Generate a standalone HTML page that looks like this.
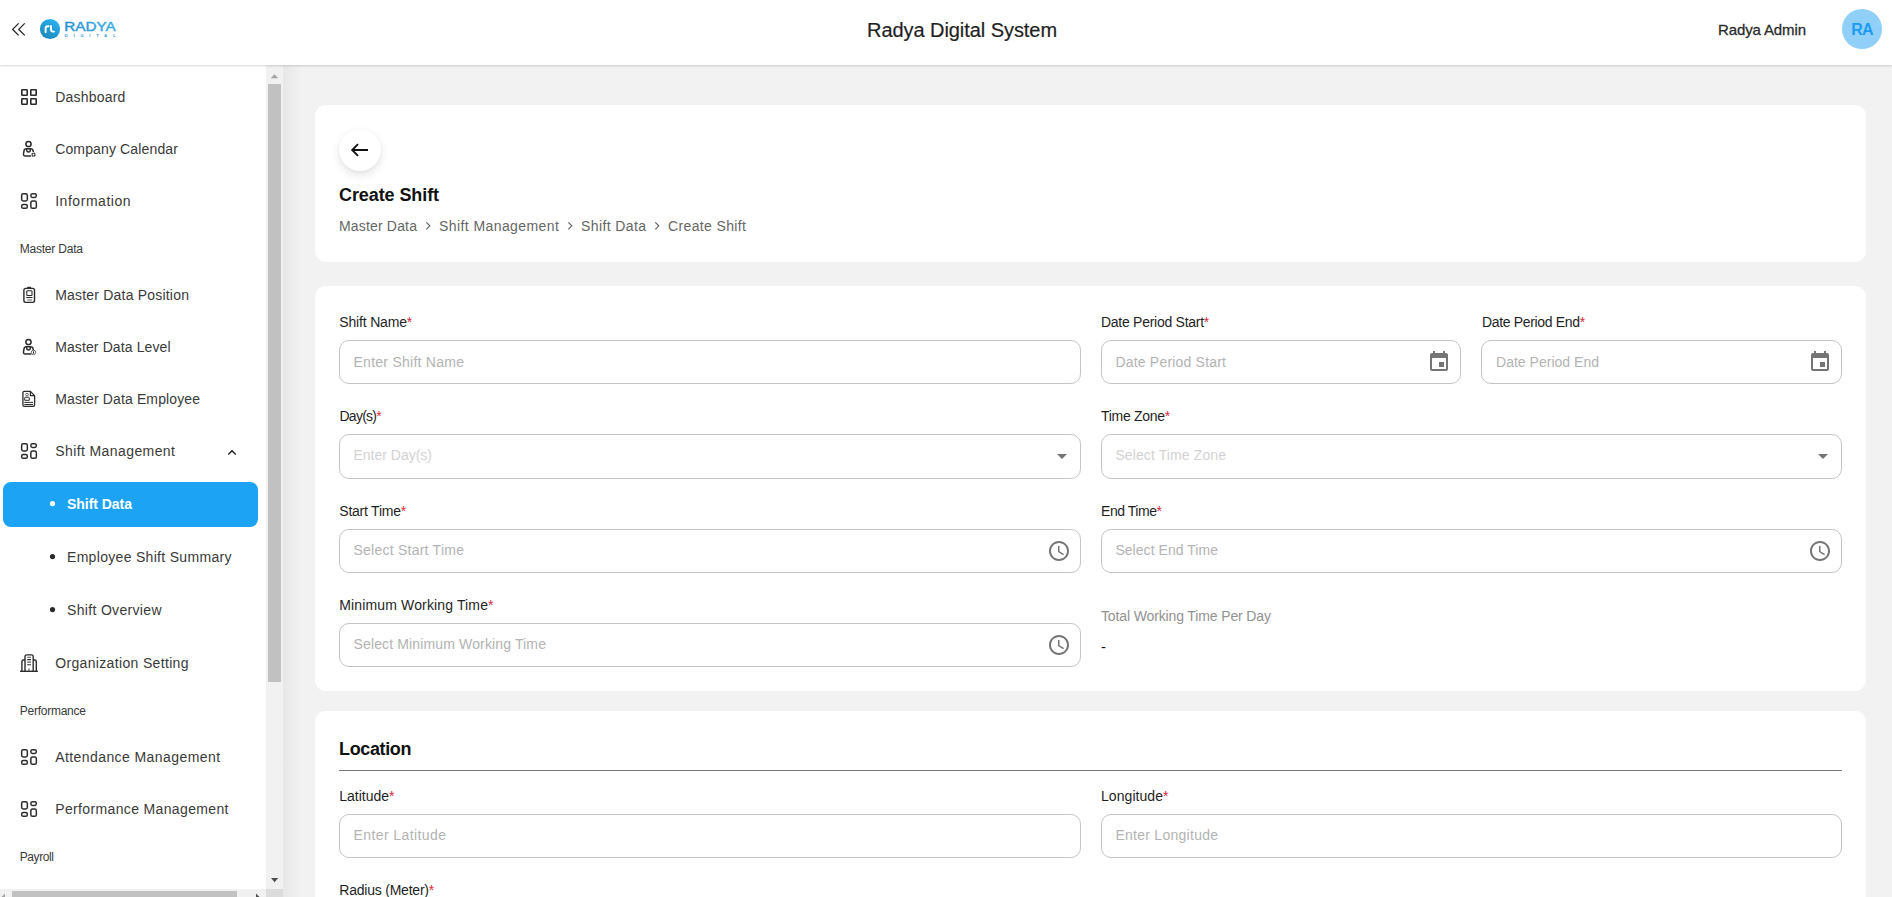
<!DOCTYPE html>
<html lang="en">
<head>
<meta charset="utf-8">
<title>Radya Digital System - Create Shift</title>
<style>
*{box-sizing:border-box;margin:0;padding:0}
html,body{width:1892px;height:897px;overflow:hidden;background:#f2f2f2;font-family:"Liberation Sans",sans-serif}
#root{position:relative;width:1892px;height:897px;overflow:hidden;background:#f2f2f2}
.abs{position:absolute}
.grp{position:absolute;left:0;top:0;width:0;height:0}
.t{position:absolute;white-space:nowrap;line-height:1}
.req{color:#e0243a}
.med{-webkit-text-stroke:0.3px currentColor}
.med2{-webkit-text-stroke:0.2px currentColor}
#header{position:absolute;left:0;top:0;width:1892px;height:65px;background:#fff;box-shadow:0 1px 2px rgba(0,0,0,.17);z-index:5}
#sidebar{position:absolute;left:0;top:65px;width:266px;height:832px;background:#fff;z-index:2}
#sideshadow{position:absolute;left:283px;top:65px;width:20px;height:832px;background:linear-gradient(90deg,rgba(0,0,0,.045),rgba(0,0,0,0));z-index:1}
#vtrack{position:absolute;left:266px;top:66px;width:17px;height:823px;background:#f1f1f1;z-index:3}
#vthumb{position:absolute;left:268px;top:84px;width:13px;height:598px;background:#c1c1c1;z-index:4}
#htrack{position:absolute;left:0;top:889px;width:266px;height:8px;background:#f1f1f1;z-index:3}
#hthumb{position:absolute;left:12px;top:891px;width:225px;height:6px;background:#c1c1c1;z-index:4}
#corner{position:absolute;left:266px;top:889px;width:17px;height:8px;background:#dcdcdc;z-index:4}
.card{position:absolute;left:315px;width:1551px;background:#fff;border-radius:11px}
.inp{position:absolute;height:44px;border:1px solid #c4c4c4;border-radius:10px;background:#fff}
.active{position:absolute;left:3px;top:482px;width:255px;height:45px;background:#1ca3f3;border-radius:8px;z-index:3}
.z{z-index:6}
svg{position:absolute;overflow:visible}
</style>
</head>
<body>
<div id="root">
<main class="grp">
<!-- main cards -->
<div class="card" style="top:105px;height:157px"></div>
<div class="card" style="top:286px;height:405px"></div>
<div class="card" style="top:711px;height:260px"></div>

<!-- back button -->
<div class="abs" style="left:339px;top:129px;width:42px;height:42px;border-radius:50%;background:#fff;box-shadow:0 4px 10px rgba(0,0,0,.10),0 1px 3px rgba(0,0,0,.05)"></div>
<svg style="left:351px;top:143px" width="18" height="14" viewBox="0 0 18 14"><path d="M17 7H1.8M7 1.2L1.2 7L7 12.8" fill="none" stroke="#111" stroke-width="1.9" stroke-linecap="butt" stroke-linejoin="miter"/></svg>

<!-- inputs -->
<div class="inp" style="left:339px;top:340px;width:742px"></div>
<div class="inp" style="left:1101px;top:340px;width:360px"></div>
<div class="inp" style="left:1481px;top:340px;width:361px"></div>
<div class="inp" style="left:339px;top:434px;width:742px;height:45px"></div>
<div class="inp" style="left:1101px;top:434px;width:741px;height:45px"></div>
<div class="inp" style="left:339px;top:529px;width:742px"></div>
<div class="inp" style="left:1101px;top:529px;width:741px"></div>
<div class="inp" style="left:339px;top:623px;width:742px"></div>
<div class="inp" style="left:339px;top:814px;width:742px"></div>
<div class="inp" style="left:1101px;top:814px;width:741px"></div>
<!-- location divider -->
<div class="abs" style="left:339px;top:770px;width:1503px;height:1px;background:#7a7a7a"></div>

<svg class="z" style="left:424px;top:220px;z-index:6" width="10" height="12" viewBox="424 220 10 12" ><path d="M426.3 222.3 L429.8 225.8 L426.3 229.3" fill="none" stroke="#666" stroke-width="1.2"/></svg>
<svg class="z" style="left:566px;top:220px;z-index:6" width="10" height="12" viewBox="566 220 10 12" ><path d="M568.3 222.3 L571.8 225.8 L568.3 229.3" fill="none" stroke="#666" stroke-width="1.2"/></svg>
<svg class="z" style="left:653px;top:220px;z-index:6" width="10" height="12" viewBox="653 220 10 12" ><path d="M655.3 222.3 L658.8 225.8 L655.3 229.3" fill="none" stroke="#666" stroke-width="1.2"/></svg>
<svg class="z" style="left:1427px;top:350px" width="24" height="24" viewBox="0 0 24 24"><path d="M17 12h-5v5h5v-5zM16 1v2H8V1H6v2H5c-1.11 0-1.99.9-1.99 2L3 19c0 1.1.89 2 2 2h14c1.1 0 2-.9 2-2V5c0-1.1-.9-2-2-2h-1V1h-2zm3 18H5V8h14v11z" fill="#757575"/></svg>
<svg class="z" style="left:1808px;top:350px" width="24" height="24" viewBox="0 0 24 24"><path d="M17 12h-5v5h5v-5zM16 1v2H8V1H6v2H5c-1.11 0-1.99.9-1.99 2L3 19c0 1.1.89 2 2 2h14c1.1 0 2-.9 2-2V5c0-1.1-.9-2-2-2h-1V1h-2zm3 18H5V8h14v11z" fill="#757575"/></svg>
<svg class="z" style="left:1047px;top:539px" width="24" height="24" viewBox="0 0 24 24"><path d="M11.99 2C6.47 2 2 6.48 2 12s4.47 10 9.99 10C17.52 22 22 17.52 22 12S17.52 2 11.99 2zM12 20c-4.42 0-8-3.58-8-8s3.58-8 8-8 8 3.58 8 8-3.58 8-8 8zm.5-13H11v6l5.25 3.15.75-1.23-4.5-2.67z" fill="#757575"/></svg>
<svg class="z" style="left:1808px;top:539px" width="24" height="24" viewBox="0 0 24 24"><path d="M11.99 2C6.47 2 2 6.48 2 12s4.47 10 9.99 10C17.52 22 22 17.52 22 12S17.52 2 11.99 2zM12 20c-4.42 0-8-3.58-8-8s3.58-8 8-8 8 3.58 8 8-3.58 8-8 8zm.5-13H11v6l5.25 3.15.75-1.23-4.5-2.67z" fill="#757575"/></svg>
<svg class="z" style="left:1047px;top:633px" width="24" height="24" viewBox="0 0 24 24"><path d="M11.99 2C6.47 2 2 6.48 2 12s4.47 10 9.99 10C17.52 22 22 17.52 22 12S17.52 2 11.99 2zM12 20c-4.42 0-8-3.58-8-8s3.58-8 8-8 8 3.58 8 8-3.58 8-8 8zm.5-13H11v6l5.25 3.15.75-1.23-4.5-2.67z" fill="#757575"/></svg>
<svg class="z" style="left:1055px;top:452px;z-index:6" width="14" height="9" viewBox="1055 452 14 9" ><path d="M1057 454 H1067 L1062 459 Z" fill="#757575"/></svg>
<svg class="z" style="left:1816px;top:452px;z-index:6" width="14" height="9" viewBox="1816 452 14 9" ><path d="M1818 454 H1828 L1823 459 Z" fill="#757575"/></svg>

<div class="t z " style="left:339.0px;top:185.8px;font-size:18px;font-weight:700;color:#111;letter-spacing:-0.09px">Create Shift</div>
<div class="t z " style="left:339.0px;top:219.4px;font-size:14px;font-weight:400;color:#666;letter-spacing:0.17px">Master Data</div>
<div class="t z " style="left:439.0px;top:219.4px;font-size:14px;font-weight:400;color:#666;letter-spacing:0.42px">Shift Management</div>
<div class="t z " style="left:581.0px;top:219.4px;font-size:14px;font-weight:400;color:#666;letter-spacing:0.39px">Shift Data</div>
<div class="t z " style="left:668.0px;top:219.4px;font-size:14px;font-weight:400;color:#666;letter-spacing:0.37px">Create Shift</div>
<div class="t z " style="left:339.3px;top:315.1px;font-size:14px;font-weight:400;color:#1f1f1f;letter-spacing:-0.17px">Shift Name<span class="req" style="letter-spacing:0">*</span></div>
<div class="t z " style="left:1101.0px;top:315.1px;font-size:14px;font-weight:400;color:#1f1f1f;letter-spacing:-0.27px">Date Period Start<span class="req" style="letter-spacing:0">*</span></div>
<div class="t z " style="left:1482.0px;top:315.1px;font-size:14px;font-weight:400;color:#1f1f1f;letter-spacing:-0.34px">Date Period End<span class="req" style="letter-spacing:0">*</span></div>
<div class="t z " style="left:339.5px;top:409.1px;font-size:14px;font-weight:400;color:#1f1f1f;letter-spacing:-0.75px">Day(s)<span class="req" style="letter-spacing:0">*</span></div>
<div class="t z " style="left:1101.0px;top:409.1px;font-size:14px;font-weight:400;color:#1f1f1f;letter-spacing:-0.30px">Time Zone<span class="req" style="letter-spacing:0">*</span></div>
<div class="t z " style="left:339.3px;top:504.1px;font-size:14px;font-weight:400;color:#1f1f1f;letter-spacing:-0.23px">Start Time<span class="req" style="letter-spacing:0">*</span></div>
<div class="t z " style="left:1101.0px;top:504.1px;font-size:14px;font-weight:400;color:#1f1f1f;letter-spacing:-0.45px">End Time<span class="req" style="letter-spacing:0">*</span></div>
<div class="t z " style="left:339.3px;top:598.1px;font-size:14px;font-weight:400;color:#1f1f1f;letter-spacing:0.14px">Minimum Working Time<span class="req" style="letter-spacing:0">*</span></div>
<div class="t z " style="left:1101.0px;top:609.1px;font-size:14px;font-weight:400;color:#929292;letter-spacing:-0.13px">Total Working Time Per Day</div>
<div class="t z " style="left:1101.0px;top:639.3px;font-size:15px;font-weight:400;color:#111;letter-spacing:0.00px">-</div>
<div class="t z " style="left:339.3px;top:789.1px;font-size:14px;font-weight:400;color:#1f1f1f;letter-spacing:-0.02px">Latitude<span class="req" style="letter-spacing:0">*</span></div>
<div class="t z " style="left:1101.0px;top:789.1px;font-size:14px;font-weight:400;color:#1f1f1f;letter-spacing:0.06px">Longitude<span class="req" style="letter-spacing:0">*</span></div>
<div class="t z " style="left:339.3px;top:883.1px;font-size:14px;font-weight:400;color:#1f1f1f;letter-spacing:-0.22px">Radius (Meter)<span class="req" style="letter-spacing:0">*</span></div>
<div class="t z " style="left:353.5px;top:355.1px;font-size:14px;font-weight:400;color:#b3b3b3;letter-spacing:0.26px">Enter Shift Name</div>
<div class="t z " style="left:1115.4px;top:355.1px;font-size:14px;font-weight:400;color:#b3b3b3;letter-spacing:0.20px">Date Period Start</div>
<div class="t z " style="left:1496.0px;top:355.1px;font-size:14px;font-weight:400;color:#b3b3b3;letter-spacing:0.02px">Date Period End</div>
<div class="t z " style="left:353.5px;top:448.1px;font-size:14px;font-weight:400;color:#d2d2d2;letter-spacing:-0.01px">Enter Day(s)</div>
<div class="t z " style="left:1115.4px;top:448.1px;font-size:14px;font-weight:400;color:#d2d2d2;letter-spacing:0.11px">Select Time Zone</div>
<div class="t z " style="left:353.5px;top:543.1px;font-size:14px;font-weight:400;color:#b3b3b3;letter-spacing:0.24px">Select Start Time</div>
<div class="t z " style="left:1115.4px;top:543.1px;font-size:14px;font-weight:400;color:#b3b3b3;letter-spacing:0.05px">Select End Time</div>
<div class="t z " style="left:353.5px;top:637.1px;font-size:14px;font-weight:400;color:#b3b3b3;letter-spacing:0.14px">Select Minimum Working Time</div>
<div class="t z " style="left:353.5px;top:828.1px;font-size:14px;font-weight:400;color:#b3b3b3;letter-spacing:0.41px">Enter Latitude</div>
<div class="t z " style="left:1115.4px;top:828.1px;font-size:14px;font-weight:400;color:#b3b3b3;letter-spacing:0.27px">Enter Longitude</div>
<div class="t z " style="left:339.0px;top:739.8px;font-size:18px;font-weight:700;color:#111;letter-spacing:-0.36px">Location</div>
</main>

<nav class="grp">
<!-- sidebar -->
<div id="sideshadow"></div>
<div id="sidebar"></div>
<div class="active"></div>
<div id="vtrack"></div><div id="vthumb"></div>
<div id="htrack"></div><div id="hthumb"></div><div id="corner"></div>
<svg class="z" style="left:18px;top:87px;z-index:6" width="22" height="20" viewBox="18 87 22 20" ><rect x="21.8" y="89.8" width="5.4" height="5.4" rx="0.4" fill="none" stroke="#2b2b2b" stroke-width="1.6"/><rect x="30.8" y="89.8" width="5.4" height="5.4" rx="0.4" fill="none" stroke="#2b2b2b" stroke-width="1.6"/><rect x="21.8" y="98.8" width="5.4" height="5.4" rx="0.4" fill="none" stroke="#2b2b2b" stroke-width="1.6"/><rect x="30.8" y="98.8" width="5.4" height="5.4" rx="0.4" fill="none" stroke="#2b2b2b" stroke-width="1.6"/></svg>
<svg class="z" style="left:18px;top:190.9px;z-index:6" width="22" height="21" viewBox="18 190.9 22 21" ><rect x="21.65" y="193.65" width="5.7" height="7.2" rx="1.7" fill="none" stroke="#2b2b2b" stroke-width="1.5"/><rect x="30.85" y="193.65" width="5.5" height="3.7" rx="1.7" fill="none" stroke="#2b2b2b" stroke-width="1.5"/><rect x="21.65" y="204.45" width="5.7" height="3.8" rx="1.7" fill="none" stroke="#2b2b2b" stroke-width="1.5"/><rect x="30.85" y="200.85" width="5.5" height="7.4" rx="1.7" fill="none" stroke="#2b2b2b" stroke-width="1.5"/></svg>
<svg class="z" style="left:18px;top:440.9px;z-index:6" width="22" height="21" viewBox="18 440.9 22 21" ><rect x="21.65" y="443.65" width="5.7" height="7.2" rx="1.7" fill="none" stroke="#2b2b2b" stroke-width="1.5"/><rect x="30.85" y="443.65" width="5.5" height="3.7" rx="1.7" fill="none" stroke="#2b2b2b" stroke-width="1.5"/><rect x="21.65" y="454.45" width="5.7" height="3.8" rx="1.7" fill="none" stroke="#2b2b2b" stroke-width="1.5"/><rect x="30.85" y="450.85" width="5.5" height="7.4" rx="1.7" fill="none" stroke="#2b2b2b" stroke-width="1.5"/></svg>
<svg class="z" style="left:18px;top:746.9px;z-index:6" width="22" height="21" viewBox="18 746.9 22 21" ><rect x="21.65" y="749.65" width="5.7" height="7.2" rx="1.7" fill="none" stroke="#2b2b2b" stroke-width="1.5"/><rect x="30.85" y="749.65" width="5.5" height="3.7" rx="1.7" fill="none" stroke="#2b2b2b" stroke-width="1.5"/><rect x="21.65" y="760.45" width="5.7" height="3.8" rx="1.7" fill="none" stroke="#2b2b2b" stroke-width="1.5"/><rect x="30.85" y="756.85" width="5.5" height="7.4" rx="1.7" fill="none" stroke="#2b2b2b" stroke-width="1.5"/></svg>
<svg class="z" style="left:18px;top:798.9px;z-index:6" width="22" height="21" viewBox="18 798.9 22 21" ><rect x="21.65" y="801.65" width="5.7" height="7.2" rx="1.7" fill="none" stroke="#2b2b2b" stroke-width="1.5"/><rect x="30.85" y="801.65" width="5.5" height="3.7" rx="1.7" fill="none" stroke="#2b2b2b" stroke-width="1.5"/><rect x="21.65" y="812.45" width="5.7" height="3.8" rx="1.7" fill="none" stroke="#2b2b2b" stroke-width="1.5"/><rect x="30.85" y="808.85" width="5.5" height="7.4" rx="1.7" fill="none" stroke="#2b2b2b" stroke-width="1.5"/></svg>
<svg class="z" style="left:18px;top:138.1px;z-index:6" width="22" height="22" viewBox="18 138.1 22 22" ><circle cx="28.5" cy="144.1" r="2.6" fill="none" stroke="#2b2b2b" stroke-width="1.5"/><path d="M30.8 156 H25.4 Q23.3 156 23.5 154 L24 150.9 Q24.3 148.9 26.3 148.9 H30.7 Q32.8 148.9 33.1 150.9 L33.3 151.9" fill="none" stroke="#2b2b2b" stroke-width="1.5" stroke-linecap="round"/><path d="M26.7 148.9 V150.1 Q26.7 152.1 28.5 152.1 Q30.3 152.1 30.3 150.1 V148.9" fill="none" stroke="#2b2b2b" stroke-width="1.4"/><circle cx="33.5" cy="154.8" r="2.6" fill="#fff"/><circle cx="33.5" cy="154.8" r="1.5" fill="#fff" stroke="#2b2b2b" stroke-width="1.5" stroke-dasharray="1.6 0.5"/></svg>
<svg class="z" style="left:18px;top:336px;z-index:6" width="22" height="22" viewBox="18 336 22 22" ><circle cx="28.5" cy="342" r="2.6" fill="none" stroke="#2b2b2b" stroke-width="1.5"/><path d="M30.8 353.9 H25.4 Q23.3 353.9 23.5 351.9 L24 348.8 Q24.3 346.8 26.3 346.8 H30.7 Q32.8 346.8 33.1 348.8 L33.3 349.8" fill="none" stroke="#2b2b2b" stroke-width="1.5" stroke-linecap="round"/><path d="M26.7 346.8 V348 Q26.7 350 28.5 350 Q30.3 350 30.3 348 V346.8" fill="none" stroke="#2b2b2b" stroke-width="1.4"/><circle cx="33.5" cy="352.4" r="2.2" fill="#fff" stroke="#555" stroke-width="0.9"/><path d="M33.5 351.3 V353.6" stroke="#2b2b2b" stroke-width="1"/></svg>
<svg class="z" style="left:18px;top:284px;z-index:6" width="22" height="22" viewBox="18 284 22 22" ><rect x="23.9" y="288.4" width="10.6" height="14" rx="1.8" fill="none" stroke="#2b2b2b" stroke-width="1.4"/><rect x="27.2" y="286.7" width="3.9" height="1.6" rx="0.6" fill="#2b2b2b"/><rect x="26.8" y="290.7" width="5.2" height="4.8" rx="0.5" fill="none" stroke="#2b2b2b" stroke-width="1.05"/><path d="M26.3 297.5 H32.5" stroke="#2b2b2b" stroke-width="1.1"/><path d="M27.2 300 H31.9" stroke="#8a8a8a" stroke-width="1.4"/></svg>
<svg class="z" style="left:18px;top:388px;z-index:6" width="22" height="22" viewBox="18 388 22 22" ><path d="M24.3 391.4 H30.4 L34.6 395.6 V404.9 Q34.6 406.3 33.2 406.3 H24.3 Q22.9 406.3 22.9 404.9 V392.8 Q22.9 391.4 24.3 391.4 Z" fill="none" stroke="#2b2b2b" stroke-width="1.3" stroke-linejoin="round"/><path d="M30.4 391.6 V395.6 H34.4" fill="none" stroke="#2b2b2b" stroke-width="1.2"/><circle cx="27" cy="394.6" r="1.3" fill="none" stroke="#555" stroke-width="0.9"/><path d="M24.7 400.3 V398 Q24.7 397.3 25.4 397.3 H28.6 Q29.3 397.3 29.3 398 V400.3 Z" fill="none" stroke="#2b2b2b" stroke-width="1"/><path d="M24.3 402.4 H33 M24.3 404.5 H33" stroke="#2b2b2b" stroke-width="1"/></svg>
<svg class="z" style="left:18px;top:652px;z-index:6" width="22" height="22" viewBox="18 652 22 22" ><path d="M20 671.3 H37.9" stroke="#2b2b2b" stroke-width="1.4"/><path d="M25 671 V656.6 Q25 654.9 26.7 654.9 H31.5 Q33.2 654.9 33.2 656.6 V671" fill="none" stroke="#2b2b2b" stroke-width="1.4"/><path d="M21.9 671 V661.6 Q21.9 660 23.5 660 H25 M33.2 660 H34.7 Q36.3 660 36.3 661.6 V671" fill="none" stroke="#2b2b2b" stroke-width="1.4"/><path d="M27.2 657.2 H31 M27.2 662.1 H31" stroke="#555" stroke-width="1.1"/><path d="M27.2 659.6 H31 M27.2 664.7 H31" stroke="#2b2b2b" stroke-width="1.1"/><path d="M29 668.4 V671" stroke="#666" stroke-width="1.3"/></svg>
<svg class="z" style="left:225px;top:446px;z-index:6" width="14" height="12" viewBox="225 446 14 12" ><path d="M228.3 454.5 L232 450.8 L235.7 454.5" fill="none" stroke="#222" stroke-width="1.5"/></svg>
<svg class="z" style="left:48px;top:499px;z-index:6" width="9" height="9" viewBox="48 499 9 9" ><circle cx="52.5" cy="503.6" r="2.6" fill="#fff"/></svg>
<svg class="z" style="left:48px;top:552px;z-index:6" width="9" height="9" viewBox="48 552 9 9" ><circle cx="52.5" cy="556.6" r="2.6" fill="#2b2b2b"/></svg>
<svg class="z" style="left:48px;top:605px;z-index:6" width="9" height="9" viewBox="48 605 9 9" ><circle cx="52.5" cy="609.6" r="2.6" fill="#2b2b2b"/></svg>
<svg class="z" style="left:266px;top:70px;z-index:6" width="17" height="12" viewBox="266 70 17 12" ><path d="M270.8 78.3 L274.5 74.2 L278.2 78.3 Z" fill="#a3a3a3"/></svg>
<svg class="z" style="left:266px;top:875px;z-index:6" width="17" height="12" viewBox="266 875 17 12" ><path d="M271 878 H278.2 L274.6 882.2 Z" fill="#505050"/></svg>
<svg class="z" style="left:0px;top:889px;z-index:6" width="10" height="8" viewBox="0 889 10 8" ><path d="M5 893.4 L1 897.5 L5 901.6 Z" fill="#a3a3a3"/></svg>
<svg class="z" style="left:252px;top:889px;z-index:6" width="10" height="8" viewBox="252 889 10 8" ><path d="M256 893.4 L260 897.5 L256 901.6 Z" fill="#505050"/></svg>

<div class="t z " style="left:55.2px;top:90.1px;font-size:14px;font-weight:400;color:#3a3a3a;letter-spacing:0.20px">Dashboard</div>
<div class="t z " style="left:55.2px;top:142.1px;font-size:14px;font-weight:400;color:#3a3a3a;letter-spacing:0.14px">Company Calendar</div>
<div class="t z " style="left:55.2px;top:194.1px;font-size:14px;font-weight:400;color:#3a3a3a;letter-spacing:0.54px">Information</div>
<div class="t z " style="left:19.7px;top:242.8px;font-size:12px;font-weight:400;color:#3a3a3a;letter-spacing:-0.21px">Master Data</div>
<div class="t z " style="left:55.2px;top:288.1px;font-size:14px;font-weight:400;color:#3a3a3a;letter-spacing:0.20px">Master Data Position</div>
<div class="t z " style="left:55.2px;top:340.1px;font-size:14px;font-weight:400;color:#3a3a3a;letter-spacing:0.11px">Master Data Level</div>
<div class="t z " style="left:55.2px;top:392.1px;font-size:14px;font-weight:400;color:#3a3a3a;letter-spacing:0.13px">Master Data Employee</div>
<div class="t z " style="left:55.2px;top:444.1px;font-size:14px;font-weight:400;color:#3a3a3a;letter-spacing:0.41px">Shift Management</div>
<div class="t z " style="left:67.0px;top:497.1px;font-size:14px;font-weight:700;color:#ffffff;letter-spacing:-0.04px">Shift Data</div>
<div class="t z " style="left:67.0px;top:550.1px;font-size:14px;font-weight:400;color:#3a3a3a;letter-spacing:0.31px">Employee Shift Summary</div>
<div class="t z " style="left:67.0px;top:603.1px;font-size:14px;font-weight:400;color:#3a3a3a;letter-spacing:0.33px">Shift Overview</div>
<div class="t z " style="left:55.2px;top:656.1px;font-size:14px;font-weight:400;color:#3a3a3a;letter-spacing:0.34px">Organization Setting</div>
<div class="t z " style="left:19.7px;top:704.8px;font-size:12px;font-weight:400;color:#3a3a3a;letter-spacing:-0.24px">Performance</div>
<div class="t z " style="left:55.2px;top:750.1px;font-size:14px;font-weight:400;color:#3a3a3a;letter-spacing:0.42px">Attendance Management</div>
<div class="t z " style="left:55.2px;top:802.1px;font-size:14px;font-weight:400;color:#3a3a3a;letter-spacing:0.36px">Performance Management</div>
<div class="t z " style="left:19.7px;top:850.8px;font-size:12px;font-weight:400;color:#3a3a3a;letter-spacing:-0.40px">Payroll</div>
</nav>

<header class="grp">
<!-- header -->
<div id="header"></div>
<div class="abs z" style="left:1842px;top:9px;width:40px;height:40px;border-radius:50%;background:#90d0f8"></div>
<svg class="z" style="left:10px;top:20px;z-index:6" width="18" height="19" viewBox="10 20 18 19" ><path d="M18.6 23.4 L12.7 29.4 L18.6 35.4 M24.7 23.4 L18.8 29.4 L24.7 35.4" fill="none" stroke="#222" stroke-width="1.3"/></svg>
<svg class="z" style="left:38px;top:16px;z-index:6" width="82" height="26" viewBox="38 16 82 26" ><defs><linearGradient id="lg" x1="0.8" y1="0" x2="0.2" y2="1"><stop offset="0" stop-color="#2bb5f5"/><stop offset="1" stop-color="#1b84b6"/></linearGradient><linearGradient id="lt" x1="0" y1="0" x2="1" y2="0"><stop offset="0" stop-color="#2a8fd2"/><stop offset="1" stop-color="#3aaeea"/></linearGradient></defs><circle cx="50" cy="29" r="10.1" fill="url(#lg)"/><path d="M45.6 32.2 V28.6 Q45.6 26.3 48 26.3 H48.6" fill="none" stroke="#fff" stroke-width="1.9" stroke-linecap="round"/><path d="M51 26 V29.6 Q51 31.6 53 31.6 H54" fill="none" stroke="#fff" stroke-width="1.9" stroke-linecap="round"/><text x="64.2" y="30.6" font-family="Liberation Sans, sans-serif" font-size="13.4" font-weight="400" fill="url(#lt)" stroke="url(#lt)" stroke-width="0.45" textLength="51.5" lengthAdjust="spacingAndGlyphs">RADYA</text><text x="64.6" y="36.9" font-family="Liberation Sans, sans-serif" font-size="4.4" font-weight="700" fill="#3f9fde" textLength="51" lengthAdjust="spacing">DIGITAL</text></svg>

<div class="t z med2" style="left:867.0px;top:20.1px;font-size:20px;font-weight:400;color:#1f1f1f;letter-spacing:-0.06px">Radya Digital System</div>
<div class="t z med" style="left:1718.0px;top:22.3px;font-size:15px;font-weight:400;color:#2b2b2b;letter-spacing:-0.12px">Radya Admin</div>
<div class="t z " style="left:1851.3px;top:21.8px;font-size:16px;font-weight:700;color:#1d9bf0;letter-spacing:-0.80px">RA</div>
</header>
</div>
</body>
</html>
